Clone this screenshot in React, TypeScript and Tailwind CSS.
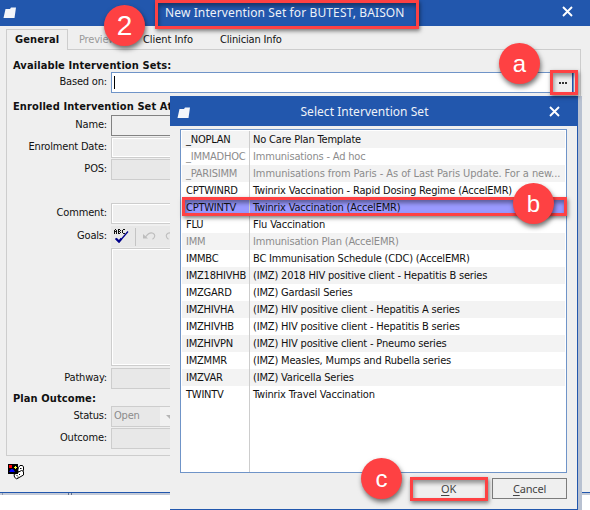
import React from 'react';

const ROWS = [
  { code: '_NOPLAN', name: 'No Care Plan Template' },
  { code: '_IMMADHOC', name: 'Immunisations - Ad hoc', off: true },
  { code: '_PARISIMM', name: 'Immunisations from Paris - As of Last Paris Update. For a new...', off: true, wide: true },
  { code: 'CPTWINRD', name: 'Twinrix Vaccination - Rapid Dosing Regime (AccelEMR)' },
  { code: 'CPTWINTV', name: 'Twinrix Vaccination (AccelEMR)', selected: true },
  { code: 'FLU', name: 'Flu Vaccination' },
  { code: 'IMM', name: 'Immunisation Plan (AccelEMR)', off: true },
  { code: 'IMMBC', name: 'BC Immunisation Schedule (CDC) (AccelEMR)' },
  { code: 'IMZ18HIVHB', name: '(IMZ) 2018 HIV positive client - Hepatitis B series' },
  { code: 'IMZGARD', name: '(IMZ) Gardasil Series' },
  { code: 'IMZHIVHA', name: '(IMZ) HIV positive client - Hepatitis A series' },
  { code: 'IMZHIVHB', name: '(IMZ) HIV positive client - Hepatitis B series' },
  { code: 'IMZHIVPN', name: '(IMZ) HIV positive client - Pneumo series' },
  { code: 'IMZMMR', name: '(IMZ) Measles, Mumps and Rubella series' },
  { code: 'IMZVAR', name: '(IMZ) Varicella Series' },
  { code: 'TWINTV', name: 'Twinrix Travel Vaccination' },
];

function FolderIcon() {
  return (
    <svg width="14" height="12" viewBox="0 0 14 12" className="block">
      <path d="M2.5 2 H7 L8 0.5 H13 L11.5 11 H0.5 Z" fill="#f4f6fa" />
    </svg>
  );
}

function CloseIcon() {
  return (
    <svg width="11" height="11" viewBox="0 0 11 11" className="block">
      <path d="M1 1 L10 10 M10 1 L1 10" stroke="#fff" strokeWidth="1.9" fill="none" />
    </svg>
  );
}

function SpellIcon() {
  return (
    <svg width="15" height="15" viewBox="0 0 15 15" className="block">
      {/* tiny pixel lettering above the tick */}
      <path
        d="M1.5 0v1M0.5 1v4M2.5 1v4M0 2.5h3M4.5 0v5M5 0.5h1M5 2.5h1M5 4.5h1M6.5 1v1M6.5 3v1M9 0.5h2M8.5 1v3M9 4.5h2"
        stroke="#111"
        strokeWidth="1"
        fill="none"
      />
      <path d="M1.5 9.5 L5 13 L14 2.5" stroke="#00008b" strokeWidth="1.3" fill="none" />
      <path d="M2 9.5 L5 12.5 L7.5 9.5" stroke="#00008b" strokeWidth="2" fill="none" />
    </svg>
  );
}

function UndoIcon({ flip = false }: { flip?: boolean }) {
  return (
    <svg width="13" height="9" viewBox="0 0 13 9" className={flip ? 'block -scale-x-100' : 'block'}>
      <path d="M2.5 5 C5 1.5 8 0.5 10 1.2 C12.5 2.5 12.3 5.5 9.5 7.3" stroke="#bdbdbd" strokeWidth="1.1" fill="none" />
      <path d="M0 2 V6.5 H5 Z" fill="#bdbdbd" />
    </svg>
  );
}

function NotesIcon() {
  return (
    <svg width="17" height="16" viewBox="0 0 17 16" className="block">
      {/* two rolled sheets behind the picture tile */}
      <path d="M10.5 3.5 L12 1.5 H14.5 L15.5 3 V6.5 L13 8 L9.5 7 Z" fill="#fff" stroke="#000" strokeWidth="1" />
      <path d="M6 10.500 L13.500 6.500 L15.500 7.500 V11 L8.500 15 L6.500 13 Z" fill="#fff" stroke="#000" strokeWidth="1" />
      <path d="M8.500 11.500 h1 M11 10.500 h1 M9.500 13 h1 M12 4.500 h1.500" stroke="#000" strokeWidth="1" />
      <rect width="10" height="10" fill="#000" />
      <rect x="1" y="1" width="3" height="3" fill="#f00" />
      <path d="M6 3.5h3M7.5 2v3" stroke="#ff3" strokeWidth="1" />
      <path d="M1 8 L3 5 H5 L7 8 Z" fill="#00f" />
    </svg>
  );
}

function Badge({ children, className }: { children: React.ReactNode; className: string }) {
  return (
    <div
      className={`absolute flex size-[41px] items-center justify-center rounded-full bg-[#fe4143] font-['Liberation_Sans',sans-serif] tracking-normal text-white shadow-[1px_3px_5px_rgba(0,0,0,0.55)] ${className}`}
    >
      {children}
    </div>
  );
}

function Marker({ className }: { className: string }) {
  return (
    <div
      className={`pointer-events-none absolute border-3 border-[#fe4143] shadow-[1px_2px_4px_rgba(0,0,0,0.5),inset_1px_3px_4px_rgba(0,0,0,0.4)] ${className}`}
    />
  );
}

function Label({ children }: { children: React.ReactNode }) {
  return <div className="w-[100px] shrink-0 text-right">{children}</div>;
}

function Field({ label, className }: { label: string; className: string }) {
  return (
    <div className="flex h-[21px] items-center">
      <Label>{label}</Label>
      <div className={`ml-[4px] h-full flex-1 border border-[#cdcdcd] ${className}`} />
    </div>
  );
}

function MainWindow() {
  return (
    <div className="flex h-[493px] flex-col border-b border-[#2257ad] bg-[#efefef]">
      <div className="flex h-[26px] shrink-0 items-center justify-between bg-[#2257ad] pr-[17px] pl-[3px]">
        <FolderIcon />
        <div className="mr-[8px] mb-px w-[241px] font-['Noto_Sans',sans-serif] text-[12px] tracking-[0.12px] text-[#eef2f8] whitespace-nowrap">
          New Intervention Set for BUTEST, BAISON
        </div>
        <div className="mb-[3px]">
          <CloseIcon />
        </div>
      </div>

      {/* Tabs */}
      <div className="mt-[3px] ml-[6px] flex h-[21px] shrink-0">
        <div className="relative z-10 w-[62px] border border-b-0 border-[#cdcdcd] bg-[#efefef] pl-2 leading-[20px] font-bold tracking-[0.1px]">General</div>
        <div className="w-[60px] pl-[11px] leading-[21px] text-[#9a9a9a]">Preview</div>
        <div className="w-[77px] pl-[15px] leading-[21px] tracking-[-0.05px]">Client Info</div>
        <div className="pl-[15px] leading-[21px] tracking-[-0.15px]">Clinician Info</div>
      </div>

      <div className="-mt-px mr-[9px] ml-[6px] h-[407px] shrink-0 border border-[#cdcdcd] pr-[6px]">
        <div className="h-[22px] pt-[7px] pl-[6px] leading-[17px] font-bold tracking-[0.1px]">Available Intervention Sets:</div>
        <div className="flex h-[21px] items-center">
          <Label>Based on:</Label>
          <div className="ml-[4px] flex h-full flex-1 items-center border border-[#6f94c8] bg-white pl-[2px]">
            <div className="h-[13px] w-px bg-black" />
            <div className="ml-auto flex h-full w-[20px] items-center justify-center gap-px border-r border-[#2257ad] bg-[#efefef] pl-px">
              <i className="size-[2px] bg-[#333]" />
              <i className="size-[2px] bg-[#333]" />
              <i className="size-[2px] bg-[#333]" />
            </div>
          </div>
        </div>
        <div className="h-[22px] pt-[5px] pl-[6px] leading-[17px] font-bold tracking-[0.1px]">Enrolled Intervention Set Attributes:</div>
        <div className="flex flex-col gap-px">
          <Field label="Name:" className="border-[#828282]! bg-[#efefef]" />
          <Field label="Enrolment Date:" className="bg-[#efefef] shadow-[inset_0_0_0_1px_#fff]" />
          <Field label="POS:" className="bg-[#e8e8e8]" />
        </div>
        <div className="mt-[23px]">
          <Field label="Comment:" className="bg-[#efefef] shadow-[inset_0_0_0_1px_#fff]" />
        </div>
        <div className="mt-[2px] flex h-[21px] items-center">
          <Label>Goals:</Label>
          <div className="ml-[4px] flex h-full flex-1 items-center bg-[#e8e8e8] pl-[3px]">
            <SpellIcon />
            <div className="ml-[6px] h-[18px] w-px bg-[#c4c4c4]" />
            <div className="ml-[7px] flex gap-[9px]">
              <UndoIcon />
              <UndoIcon flip />
            </div>
          </div>
        </div>
        <div className="mt-px ml-[104px] h-[118px] border border-[#cdcdcd] shadow-[inset_0_0_0_1px_#fff]" />
        <div className="mt-[2px]">
          <Field label="Pathway:" className="bg-[#e8e8e8]" />
        </div>
        <div className="h-[17px] pl-[6px] leading-[19px] font-bold tracking-[0.1px]">Plan Outcome:</div>
        <div className="flex h-[21px] items-center">
          <Label>Status:</Label>
          <div className="ml-[4px] flex h-full w-[70px] items-center border border-[#cdcdcd] bg-[#e8e8e8] pl-[2px] text-[#8c8c8c]">
            Open
            <div className="ml-auto flex h-full w-[20px] items-center justify-center bg-[#f1f1f1]">
              <svg width="8" height="4" viewBox="0 0 8 4">
                <path d="M0 0 H8 L4 4 Z" fill="#b5b5b5" />
              </svg>
            </div>
          </div>
        </div>
        <div className="mt-px">
          <Field label="Outcome:" className="bg-[#e8e8e8]" />
        </div>
      </div>

      <div className="mt-[8px] ml-[8px]">
        <NotesIcon />
      </div>
    </div>
  );
}

function SelectDialog() {
  return (
    <div className="absolute top-[96px] left-[170px] flex h-[414px] w-[408px] flex-col border-r border-b border-[#2257ad] bg-[#efefef] shadow-[4px_0_0_#b8c1d1]">
      <div className="flex h-[30px] shrink-0 items-center justify-between bg-[#2257ad] pr-[17px] pl-[7px]">
        <div className="pt-[3px]">
          <FolderIcon />
        </div>
        <div className="mt-[2px] mr-[11px] font-['Noto_Sans',sans-serif] text-[12px] tracking-[0.04px] text-[#eef2f8]">Select Intervention Set</div>
        <CloseIcon />
      </div>

      <div className="mt-[3px] ml-[10px] flex h-[344px] w-[387px] shrink-0 flex-col border border-[#6f94c8] bg-white px-px pt-px">
        {ROWS.map((row, i) => (
          <div
            key={row.code}
            className={`flex h-[17px] shrink-0 items-center whitespace-nowrap ${
              row.selected ? 'bg-[#9999ff]' : i % 2 === 0 ? 'bg-[#f3f3f3]' : 'bg-white'
            } ${row.off ? 'text-[#8c8c8c]' : 'text-[#111]'}`}
          >
            <div className="h-full w-[68px] shrink-0 border-r border-[#cdcdcd] pl-[4px] leading-[18px] tracking-[-0.22px]">{row.code}</div>
            <div className={`pl-[3px] leading-[18px] ${row.wide ? 'tracking-[-0.08px]' : ''}`}>{row.name}</div>
          </div>
        ))}
        <div className="w-[68px] flex-1 border-r border-[#cdcdcd]" />
      </div>

      <div className="mt-[5px] flex h-[21px] justify-end gap-[6px] pr-[10px] font-['Noto_Sans',sans-serif] text-[11px] tracking-[-0.2px] text-[#444]">
        <button className="w-[75px] border border-[#2257ad] bg-[#efefef] leading-[19px]">
          <u className="underline-offset-2">O</u>K
        </button>
        <button className="w-[75px] border border-[#7c7c7c] bg-[#efefef] leading-[19px]">
          <u className="underline-offset-2">C</u>ancel
        </button>
      </div>
    </div>
  );
}

export default function App() {
  return (
    <div className="relative h-[510px] w-[590px] overflow-hidden bg-white font-['DejaVu_Sans_Condensed','DejaVu_Sans',sans-serif] text-[11px] tracking-[-0.18px] text-[#111]">
      <MainWindow />
      {/* Sliver of the window underneath */}
      <div className="flex h-[2px] bg-[#c3cad8]">
        <div className="ml-[2px] w-px bg-[#8f9bb0]" />
        <div className="ml-[65px] w-px bg-[#5f6f8c]" />
        <div className="ml-[2px] w-px bg-[#5f6f8c]" />
      </div>

      <SelectDialog />

      <Marker className="top-0 left-[155px] h-[29px] w-[264px]" />
      <Marker className="top-[70px] left-[550px] h-[25px] w-[28px]" />
      <Marker className="top-[197px] left-[182px] h-[19px] w-[385px]" />
      <Marker className="top-[477px] left-[410px] h-[24px] w-[78px]" />

      <Badge className="top-[5px] left-[104px] text-[28px]">2</Badge>
      <Badge className="top-[43px] left-[499px] text-[24px]">a</Badge>
      <Badge className="top-[183px] left-[513px] text-[24px]">b</Badge>
      <Badge className="top-[458px] left-[361px] text-[24px]">c</Badge>
    </div>
  );
}
